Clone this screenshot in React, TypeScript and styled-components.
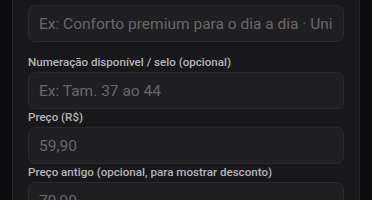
import * as React from 'react';
import styled, { createGlobalStyle } from 'styled-components';

const GlobalStyle = createGlobalStyle`
  html, body {
    margin: 0;
    padding: 0;
    background: #0d0d0f;
  }
  body {
    font-family: Roboto, "Noto Sans", sans-serif;
  }
`;

const Page = styled.div`
  height: 200px;
  padding: 0 12px;
  box-sizing: border-box;
  display: flex;
  flex-direction: column;
  overflow: hidden;
`;

const Panel = styled.div`
  margin-top: -20px;
  flex: none;
  height: 260px;
  background: #18181a;
  border: 1px solid #252528;
  border-radius: 10px;
  padding: 24px 15px 0;
  display: flex;
  flex-direction: column;
  box-sizing: border-box;
`;

const Field = styled.div<{ $spaced?: boolean }>`
  display: flex;
  flex-direction: column;
  flex: none;
  gap: 2px;
  margin-top: ${(p) => (p.$spaced ? '12px' : '0')};
`;

const Label = styled.label`
  font-size: 11.6px;
  font-weight: 500;
  line-height: 16px;
  color: #b4b4b8;
  white-space: nowrap;
`;

const Input = styled.input`
  height: 37px;
  width: 100%;
  box-sizing: border-box;
  background: #1f1f22;
  border: 1px solid #2a2a2d;
  border-radius: 7px;
  padding: 0 10px;
  font-family: Roboto, "Noto Sans", sans-serif;
  font-size: 15.5px;
  color: #e4e4e7;
  outline: none;

  &::placeholder {
    color: #67676c;
  }
`;

const fields = [
  { label: 'Numeração disponível / selo (opcional)', placeholder: 'Ex: Tam. 37 ao 44' },
  { label: 'Preço (R$)', placeholder: '59,90' },
  { label: 'Preço antigo (opcional, para mostrar desconto)', placeholder: '79,90' },
];

export default function App() {
  return (
    <>
      <GlobalStyle />
      <Page>
        <Panel>
          <Field>
            <Input placeholder="Ex: Conforto premium para o dia a dia · Unissex" />
          </Field>
          {fields.map((f, i) => (
            <Field key={f.label} $spaced={i === 0}>
              <Label>{f.label}</Label>
              <Input placeholder={f.placeholder} />
            </Field>
          ))}
        </Panel>
      </Page>
    </>
  );
}
